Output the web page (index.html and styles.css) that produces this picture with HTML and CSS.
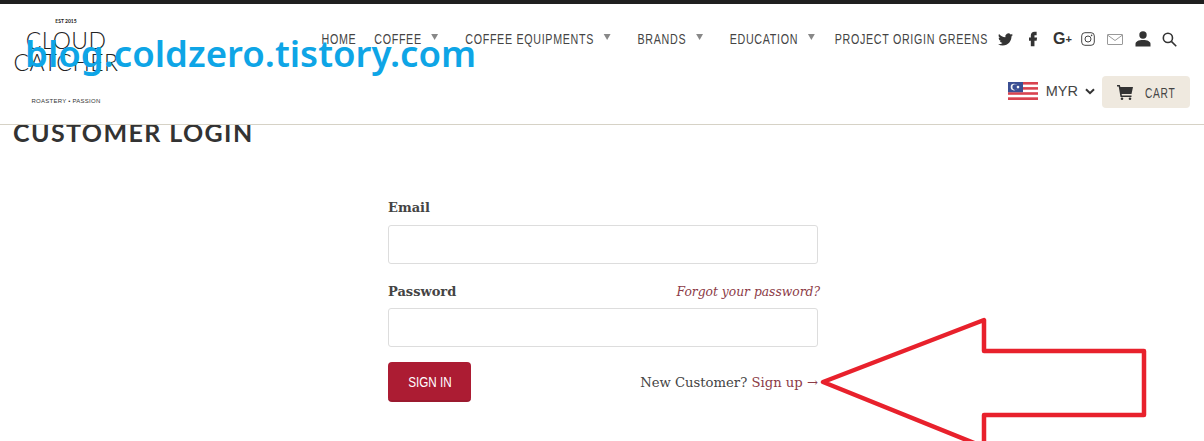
FILE: index.html
```html
<!DOCTYPE html>
<html lang="en">

<head>
    <meta charset="UTF-8">
    <title>Customer Login</title>
    <link rel="stylesheet" href="styles.css">
</head>

<body>

    <header class="site-header">
        <a class="logo" href="#">
            <span class="logo-est">EST 2015</span>
            <span class="logo-name logo-cloud">CLOUD</span>
            <span class="logo-name logo-catcher">CATCHER</span>
            <span class="logo-tag">ROASTERY • PASSION</span>
        </a>

        <div class="header-right">
            <div class="nav-row">
                <nav class="main-nav">
                    <a class="nav-home" href="#">HOME</a>
                    <a class="has-sub" href="#">COFFEE</a>
                    <a class="has-sub" href="#">COFFEE EQUIPMENTS</a>
                    <a class="has-sub" href="#">BRANDS</a>
                    <a class="has-sub last-sub" href="#">EDUCATION</a>
                    <a href="#">PROJECT ORIGIN GREENS</a>
                </nav>
                <div class="social">
                    <svg class="ic-twitter" viewBox="0 0 24 24"><path d="M23.953 4.57a10 10 0 01-2.825.775 4.958 4.958 0 002.163-2.723c-.951.555-2.005.959-3.127 1.184a4.92 4.92 0 00-8.384 4.482C7.69 8.095 4.067 6.13 1.64 3.162a4.822 4.822 0 00-.666 2.475c0 1.71.87 3.213 2.188 4.096a4.904 4.904 0 01-2.228-.616v.06a4.923 4.923 0 003.946 4.827 4.996 4.996 0 01-2.212.085 4.936 4.936 0 004.604 3.417 9.867 9.867 0 01-6.102 2.105c-.39 0-.779-.023-1.17-.067a13.995 13.995 0 007.557 2.209c9.053 0 13.998-7.496 13.998-13.985 0-.21 0-.42-.015-.63A9.935 9.935 0 0024 4.59z"/></svg>
                    <svg class="ic-facebook" viewBox="6 2 12 22"><path d="M14 8h3V3h-3c-3 0-5 2-5 5v3H6.500v4.500H9V23h5v-7.500h3l.6-4.500H14V8.800c0-.5.300-.8 0-.8z"/></svg>
                    <span class="ic-gplus">G<small>+</small></span>
                    <svg class="ic-insta" viewBox="0 0 14 14"><rect x="0.700" y="0.700" width="12.600" height="12.600" rx="3.200"/><circle cx="7" cy="7" r="3"/><circle class="dot" cx="10.600" cy="3.400" r="0.800"/></svg>
                    <svg class="ic-mail" viewBox="0 0 16 11"><rect x="0.500" y="0.500" width="15" height="10" rx="0.500"/><path d="M0.500 1l7.500 5.500L15.500 1"/></svg>
                    <svg class="ic-user" viewBox="0 0 16 16"><circle cx="8" cy="4" r="3.700"/><path d="M0.500 15.500v-2.500c0-2.500 3-4 7.500-4s7.500 1.500 7.500 4v2.500z"/></svg>
                    <svg class="ic-search" viewBox="0 0 16 16"><circle cx="6.300" cy="6.300" r="4.900"/><path d="M10 10l5.200 5.200"/></svg>
                </div>
            </div>

            <div class="shop-row">
                <svg class="flag" viewBox="0 0 30 18">
                    <rect width="30" height="18" fill="#fff"/>
                    <rect width="30" height="2.600" fill="#d9434f"/>
                    <rect y="5.100" width="30" height="2.600" fill="#d9434f"/>
                    <rect y="10.200" width="30" height="2.600" fill="#d9434f"/>
                    <rect y="15.300" width="30" height="2.700" fill="#d9434f"/>
                    <rect width="15" height="10.200" fill="#3b4f93"/>
                    <circle cx="6" cy="5.100" r="3.300" fill="#f4f4f4"/>
                    <circle cx="7.200" cy="5.100" r="2.800" fill="#3b4f93"/>
                    <circle cx="10" cy="5.100" r="1.300" fill="#f4f4f4"/>
                </svg>
                <span class="currency">MYR</span>
                <svg class="chevron" viewBox="0 0 10 7"><path d="M1 1.200l4 4 4-4"/></svg>
                <a class="cart-btn" href="#">
                    <svg class="cart-icon" viewBox="0 0 16 16"><path d="M0 1h2.800l.6 2H16l-1.500 7H4.600l.3 1.500H14.500V13H3.500L1.700 2.500H0z"/><circle cx="5" cy="14.700" r="1.300"/><circle cx="13" cy="14.700" r="1.300"/></svg>
                    <span class="cart-label">CART</span>
                </a>
            </div>
        </div>
    </header>

    <main class="page">
        <h1 class="page-title">CUSTOMER LOGIN</h1>

        <form class="login-form">
            <label class="field-label">Email</label>
            <input class="text-input" type="email">

            <div class="label-row">
                <label class="field-label">Password</label>
                <a class="forgot" href="#">Forgot your password?</a>
            </div>
            <input class="text-input" type="password">

            <div class="actions">
                <button class="btn-signin" type="button"><span>SIGN IN</span></button>
                <p class="signup">New Customer? <a href="#">Sign up →</a></p>
            </div>
        </form>
    </main>

    <!-- pasted over the screenshot -->
    <div class="watermark">blog.coldzero.tistory.com</div>
    <svg class="red-arrow" viewBox="0 0 1204 441">
        <path d="M823 382L984 320V351H1144V415H984V447Z"/>
    </svg>

</body>

</html>
```

FILE: styles.css
```css
* {
    box-sizing: border-box;
}

html,
body {
    margin: 0;
    padding: 0;
    height: 441px;
    overflow: hidden;
    background: #fff;
    color: #3a3a3a;
    font-family: "Liberation Serif", serif;
}

body {
    position: relative;
}

a {
    color: inherit;
    text-decoration: none;
}

/* header */
.site-header {
    display: flex;
    justify-content: space-between;
    height: 125px;
    border-top: 4px solid #1f1f1f;
    border-bottom: 1px solid #d6d2c6;
    background: #fff;
    position: relative;
    z-index: 2;
}

.logo {
    display: flex;
    flex-direction: column;
    align-items: center;
    width: 106px;
    margin-left: 13px;
    color: #222;
    font-family: Lato, sans-serif;
}

.logo-est {
    margin-top: 14px;
    font-size: 5px;
    line-height: 6px;
    font-weight: 700;
}

.logo-name {
    font-weight: 300;
    font-size: 23px;
    line-height: 22px;
    letter-spacing: 0.5px;
}

.logo-cloud {
    margin-top: 5px;
    letter-spacing: 0.4px;
}

.logo-tag {
    margin-top: 24px;
    font-family: "Liberation Sans", sans-serif;
    font-size: 6px;
    line-height: 8px;
    letter-spacing: 0.25px;
    color: #333;
}

.header-right {
    display: flex;
    flex-direction: column;
    align-items: flex-end;
    padding-right: 14px;
}

.nav-row {
    display: flex;
    align-items: center;
    height: 24px;
    margin-top: 23px;
}

/* no condensed font here, so the row is squeezed sideways;
   the negative margin takes back the width the squeeze frees up */
.main-nav {
    display: flex;
    align-items: center;
    margin-left: -299px;
    font-family: "Liberation Sans", sans-serif;
    font-size: 15.500px;
    letter-spacing: 1px;
    color: #444;
    transform: scaleX(0.69);
    transform-origin: right center;
}

.main-nav a {
    white-space: nowrap;
}

.nav-home {
    margin-right: 26px;
}

.has-sub {
    display: flex;
    align-items: center;
    margin-right: 39px;
}

.last-sub {
    margin-right: 29px;
}

.has-sub::after {
    content: "";
    margin-left: 14px;
    border-left: 5px solid transparent;
    border-right: 5px solid transparent;
    border-top: 6px solid #888;
    transform: translateY(-2px);
}

.social {
    display: flex;
    align-items: center;
    margin-left: 10px;
    margin-right: 13px;
    fill: #333;
}

.social svg {
    display: block;
}

.ic-twitter {
    width: 15px;
    height: 15px;
}

.ic-facebook {
    width: 10px;
    height: 16px;
    margin-left: 15px;
}

.ic-gplus {
    width: 19px;
    margin-left: 15px;
    font-family: "Liberation Sans", sans-serif;
    font-size: 16px;
    font-weight: 700;
    color: #333;
}

.ic-gplus small {
    font-size: 11px;
    vertical-align: 1px;
}

.ic-insta {
    width: 14px;
    height: 14px;
    margin-left: 9px;
    fill: none;
    stroke: #444;
    stroke-width: 1;
}

.ic-insta .dot {
    fill: #444;
    stroke: none;
}

.ic-mail {
    width: 16px;
    height: 11px;
    margin-left: 12px;
    fill: none;
    stroke: #999;
    stroke-width: 1;
}

.ic-user {
    width: 16px;
    height: 16px;
    margin-left: 12px;
}

.ic-search {
    width: 15px;
    height: 15px;
    margin-left: 11px;
    fill: none;
    stroke: #333;
    stroke-width: 1.700;
}

.shop-row {
    display: flex;
    align-items: center;
    margin-top: 25px;
}

.flag {
    display: block;
    width: 30px;
    height: 18px;
    margin-bottom: 3px;
}

.currency {
    margin-left: 8px;
    font-family: "Liberation Sans", sans-serif;
    font-size: 14.500px;
    color: #444;
    margin-bottom: 3px;
}

.chevron {
    width: 10px;
    height: 7px;
    margin-left: 7px;
    margin-bottom: 2px;
    fill: none;
    stroke: #333;
    stroke-width: 2;
}

.cart-btn {
    display: flex;
    align-items: center;
    height: 32px;
    width: 88px;
    margin-left: 7px;
    padding-left: 15px;
    border-radius: 4px;
    background: #efe9df;
    font-family: "Liberation Sans", sans-serif;
    font-size: 15px;
    letter-spacing: 1px;
    color: #444;
}

.cart-icon {
    width: 16px;
    height: 16px;
    margin-right: 12px;
    fill: #333;
}

.cart-label {
    transform: scaleX(0.68);
    transform-origin: left center;
}

/* page */
.page {
    position: relative;
}

.page-title {
    margin: -8px 0 0 13px;
    font-family: Lato, sans-serif;
    font-size: 25px;
    line-height: 30px;
    font-weight: 700;
    letter-spacing: 1.400px;
    color: #333;
}

.login-form {
    width: 430px;
    margin: 52px 0 0 388px;
}

.field-label {
    display: block;
    font-family: "DejaVu Serif", serif;
    font-size: 13px;
    line-height: 18px;
    font-weight: 700;
    color: #444;
}

.text-input {
    display: block;
    width: 100%;
    height: 39px;
    margin-top: 8px;
    border: 1px solid #ddd;
    border-radius: 3px;
    background: #fff;
}

.label-row {
    display: flex;
    align-items: center;
    justify-content: space-between;
    margin-top: 19px;
    margin-bottom: -1px;
}

.forgot {
    margin-right: -2px;
    font-family: "DejaVu Serif", serif;
    font-size: 12.300px;
    font-style: italic;
    color: #8c3b47;
}

.actions {
    display: flex;
    align-items: center;
    justify-content: space-between;
    margin-top: 15px;
}

.btn-signin {
    width: 83px;
    height: 40px;
    border: none;
    border-bottom: 2px solid #9b1a2f;
    border-radius: 4px;
    background: #ac1c33;
    font-family: "Liberation Sans", sans-serif;
    font-size: 15px;
    color: #fff;
}

.btn-signin span {
    display: inline-block;
    transform: scaleX(0.78);
}

.signup {
    margin: 0;
    font-family: "DejaVu Serif", serif;
    font-size: 13.200px;
    color: #444;
}

.signup a {
    color: #8c3b47;
}

/* overlays on top of the screenshot */
.watermark {
    position: absolute;
    left: 25px;
    top: 29px;
    z-index: 3;
    font-family: "Noto Sans", sans-serif;
    font-size: 36.600px;
    line-height: 48px;
    font-weight: 600;
    color: #0ea5e6;
    white-space: nowrap;
}

.red-arrow {
    position: absolute;
    left: 0;
    top: 0;
    width: 1204px;
    height: 441px;
    z-index: 3;
    fill: none;
    stroke: #e8212c;
    stroke-width: 4.500;
    stroke-linejoin: round;
}
```
